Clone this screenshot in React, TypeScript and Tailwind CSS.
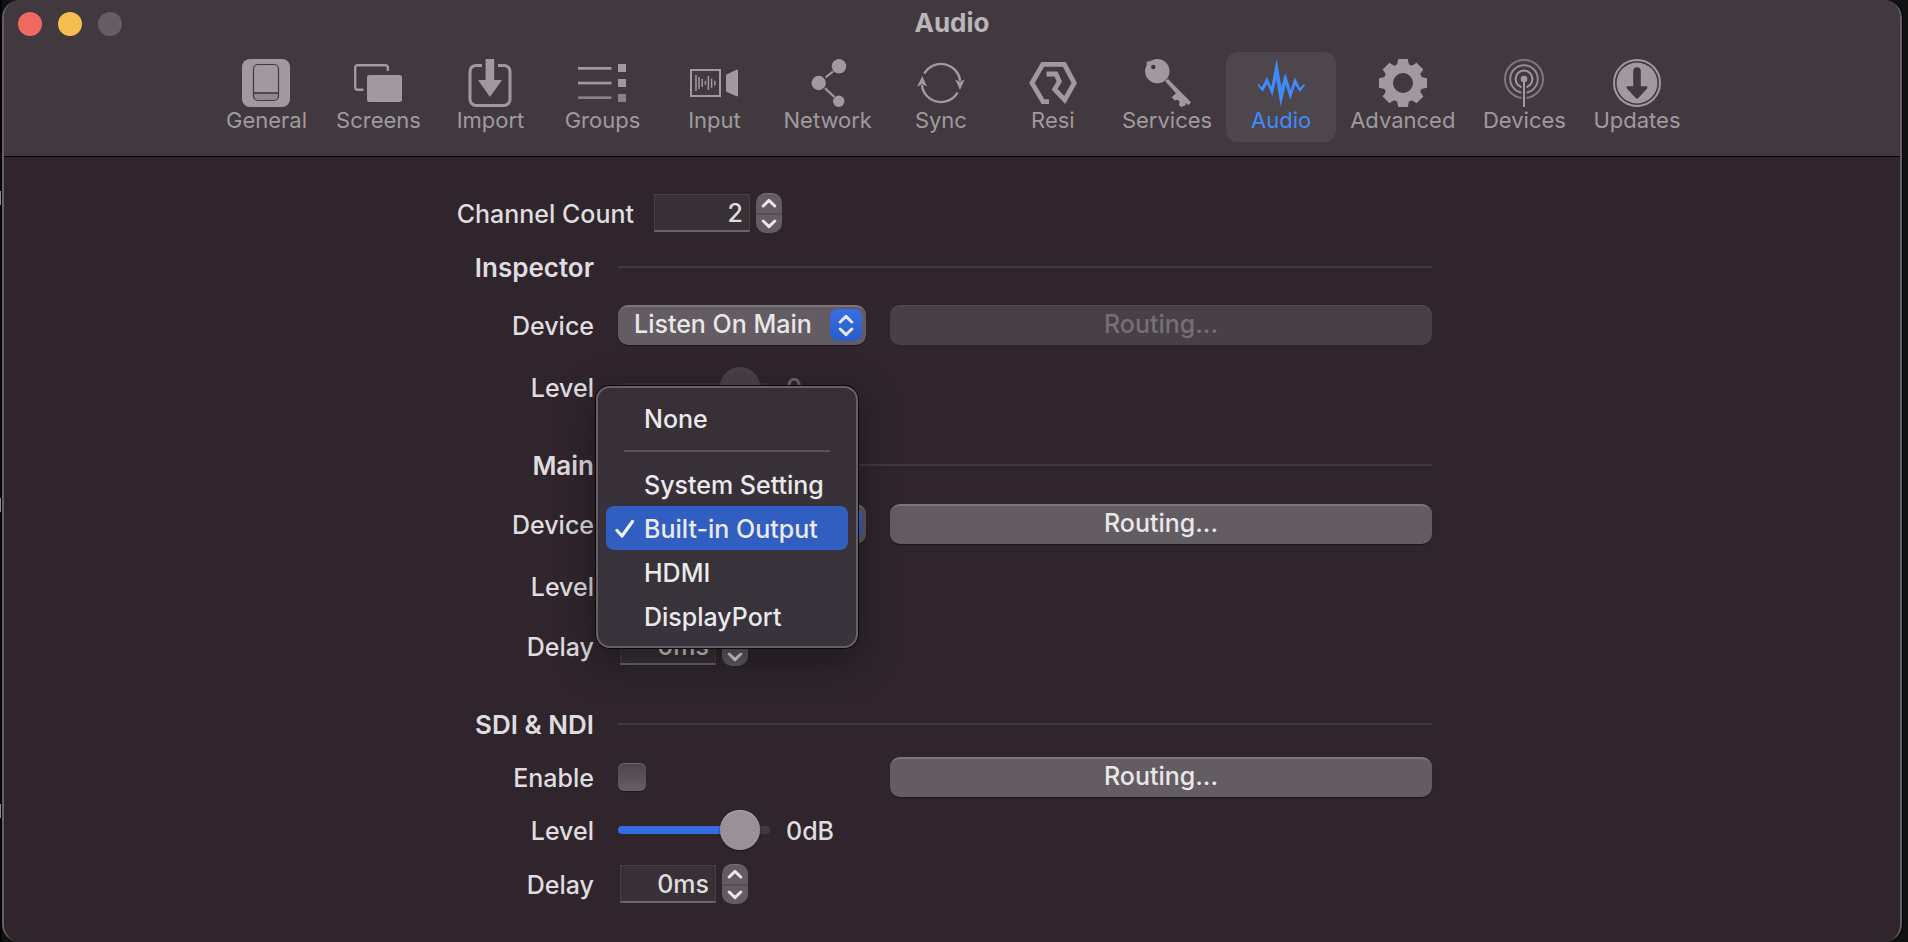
import { useId, useState } from "react";
import type { ReactNode } from "react";

const TOOLBAR_BG = "#41393f";

const icons: Record<string, ReactNode> = {
  General: (
    <>
      <rect width="48" height="48" rx="8" fill="currentColor" />
      <path d="M11.5 34H36.5V37a4.5 4.5 0 0 1-4.5 4.5H16a4.5 4.5 0 0 1-4.5-4.5Z" fill="#8f898e" />
      <rect x="11.5" y="5.5" width="25" height="36" rx="4.5" fill="none" stroke={TOOLBAR_BG} strokeWidth="1.2" />
      <path d="M11.5 34H36.5" stroke={TOOLBAR_BG} strokeWidth="1.6" />
    </>
  ),
  Screens: (
    <>
      <path d="M9.5 30.8H3.4A2.2 2.2 0 0 1 1.2 28.6V8.4A2.2 2.2 0 0 1 3.4 6.2H31.6A2.2 2.2 0 0 1 33.8 8.4V12" fill="none" stroke="currentColor" strokeWidth="2.4" />
      <rect x="13" y="16" width="35" height="27" rx="2.5" fill="currentColor" />
    </>
  ),
  Import: (
    <>
      <path d="M16 6.4H10A6 6 0 0 0 4 12.4V40.4A6 6 0 0 0 10 46.4H38A6 6 0 0 0 44 40.4V12.4A6 6 0 0 0 38 6.4H32" fill="none" stroke="currentColor" strokeWidth="3" />
      <path d="M19.6 0H28.2V21H36L24 38L12 21H19.6Z" fill="currentColor" />
    </>
  ),
  Groups: (
    <g fill="currentColor">
      <rect y="8" width="33.5" height="2.7" />
      <rect y="22.7" width="33.5" height="2.7" />
      <rect y="37.3" width="33.5" height="2.7" opacity="0.75" />
      <rect x="40" y="5" width="8" height="8" />
      <rect x="40" y="20" width="8" height="8" />
      <rect x="40" y="35" width="8" height="8" opacity="0.75" />
    </g>
  ),
  Input: (
    <>
      <rect x="1" y="11" width="29" height="26" fill="none" stroke="currentColor" strokeWidth="2" />
      <path d="M6 16V32M9 18V30M12.2 20V28M15.4 21.7V25.7M18.4 17V31M21.6 19.7V28.7M24.8 21.7V26.5" stroke="currentColor" strokeWidth="1.5" />
      <path d="M36 16.3L37 15.2L46.5 10.8H48V37.3H46.5L37 33L36 32Z" fill="currentColor" />
    </>
  ),
  Network: (
    <>
      <path d="M21.5 18.5L29 12.5M21 29.3L30.5 38" stroke="currentColor" strokeWidth="2.2" />
      <circle cx="35" cy="7.3" r="7.2" fill="currentColor" />
      <circle cx="14.7" cy="24" r="7.2" fill="currentColor" />
      <circle cx="34.7" cy="42.2" r="5.7" fill="currentColor" />
    </>
  ),
  Sync: (
    <>
      <path d="M7.3 14.7A19.2 19.2 0 0 1 43.1 22M40.6 33.5A19.2 19.2 0 0 1 4.9 26" fill="none" stroke="currentColor" strokeWidth="2.4" />
      <path d="M5.3 17L10 27.6L5 25L0 28Z M43 31L47.7 20.2L43 23L38.2 20.4Z" fill="currentColor" />
    </>
  ),
  Resi: (
    <path d="M20 42.6H14L3 24L13.7 5.4H35.3L45.3 24L35.7 41L25.7 30.4L30.3 22.4L27 15H17.5" fill="none" stroke="currentColor" strokeWidth="4.8" />
  ),
  Services: (
    <>
      <path d="M22 22L25 20L48 43.3L45.3 46.3L42.3 43.8L42.8 46.2L38 48L35.8 45.6L36.8 42.8L34.4 40.8L31.8 41.4L28.6 38.3L33 34.2Z" fill="currentColor" />
      <path d="M3.5 6L4 2.2L8 2.4Z" fill="currentColor" />
      <circle cx="14.3" cy="12.2" r="12.2" fill="currentColor" />
      <circle cx="10.3" cy="8" r="2.3" fill={TOOLBAR_BG} />
    </>
  ),
  Audio: (
    <path
      d="M0.3 26L1.3 24.7L4.7 28.3L10 18L14.3 27.7L19.7 0L24.3 27.7L28.3 14L33.7 31L37.7 18.3L43 29L47 25L48 26.3L43 33L38.3 26L33.3 40.7L28.7 26L23.7 47.7L19.3 20.3L15.3 37.3L10.3 25L5.7 32.7Z"
      fill="currentColor"
    />
  ),
  Advanced: (
    <g transform="translate(24 24)">
      <circle r="14.7" fill="none" stroke="currentColor" strokeWidth="9.4" />
      {[0, 45, 90, 135, 180, 225, 270, 315].map((a) => (
        <path key={a} d="M-4.8 -24H4.8L6.2 -17H-6.2Z" fill="currentColor" transform={`rotate(${a})`} />
      ))}
    </g>
  ),
  Devices: (
    <>
      <g fill="none" stroke="currentColor" strokeWidth="2">
        <circle cx="24" cy="20" r="19" opacity="0.65" />
        <circle cx="24" cy="20" r="13.8" opacity="0.85" />
        <circle cx="24" cy="20" r="8.4" />
      </g>
      <path d="M24 22V48" stroke={TOOLBAR_BG} strokeWidth="5" />
      <path d="M24 20V48" stroke="currentColor" strokeWidth="2" />
      <circle cx="24" cy="20" r="3.3" fill="currentColor" />
    </>
  ),
  Updates: (
    <>
      <circle cx="24" cy="24" r="23" fill="none" stroke="currentColor" strokeWidth="2" />
      <circle cx="24" cy="24" r="20.4" fill="currentColor" />
      <path d="M20.2 12A3.8 3.8 0 0 1 27.8 12V27.3H33.5Q35.4 27.6 34.3 29.2L25.4 39Q24 40.6 22.6 39L13.7 29.2Q12.6 27.6 14.5 27.3H20.2Z" fill={TOOLBAR_BG} />
    </>
  ),
};

function Toolbar() {
  const [active, setActive] = useState("Audio");
  return (
    <nav className="flex justify-center gap-0.5">
      {Object.keys(icons).map((name) => (
        <button
          key={name}
          type="button"
          onClick={() => setActive(name)}
          className={
            name === active
              ? "flex h-[90px] min-w-[110px] flex-col items-center rounded-xl bg-[#4d464c] px-3 pt-[7px] text-[#3f8bfd]"
              : "flex h-[90px] min-w-[110px] flex-col items-center rounded-xl px-3 pt-[7px] text-[#a09a9f]"
          }
        >
          <svg viewBox="0 0 48 48" className="size-12" aria-hidden="true">
            {icons[name]}
          </svg>
          <span className="text-[22px] leading-[26px]">{name}</span>
        </button>
      ))}
    </nav>
  );
}

function Chevron({ up = false }: { up?: boolean }) {
  return (
    <svg viewBox="0 0 16 10" className="h-2.5 w-4" aria-hidden="true">
      <path d={up ? "M2.2 8L8 2.4L13.8 8" : "M2.2 2L8 7.6L13.8 2"} fill="none" stroke="#e9e6e8" strokeWidth="3" strokeLinecap="round" strokeLinejoin="round" />
    </svg>
  );
}

function NumberField({ id, value }: { id: string; value: string }) {
  return (
    <div className="flex items-center gap-1.5">
      <input
        id={id}
        defaultValue={value}
        className="h-[38px] w-24 border border-b-2 border-[#463f45] border-b-[#6b656a] bg-[#393137] px-1.5 text-right text-[25px] font-medium text-[#dfdddf] outline-none"
      />
      <div className="flex h-10 w-[26px] flex-col overflow-hidden rounded-[10px] border-t border-[#777176] bg-[#635c62]">
        <button type="button" aria-label="Increase" className="flex flex-1 items-center justify-center border-b-2 border-[#564f55]">
          <Chevron up />
        </button>
        <button type="button" aria-label="Decrease" className="flex flex-1 items-center justify-center">
          <Chevron />
        </button>
      </div>
    </div>
  );
}

function Popup({ id, options, children }: { id: string; options: string[]; children?: ReactNode }) {
  return (
    <div className="relative w-[248px]">
      <select
        id={id}
        className="h-10 w-full appearance-none rounded-[10px] border-t-2 border-[#7c767b] bg-[#635c62] pr-9 pb-1 pl-4 text-[25px] font-medium text-[#e9e7e8] shadow-[0_1px_1px_#1d171c] outline-none"
      >
        {options.map((o) => (
          <option key={o}>{o}</option>
        ))}
      </select>
      <span className="pointer-events-none absolute top-1 right-1 flex size-8 flex-col items-center justify-center gap-[3px] rounded-lg bg-linear-to-b from-[#3570e4] to-[#2a5cc8]">
        <Chevron up />
        <Chevron />
      </span>
      {children}
    </div>
  );
}

function Level({ id, text, disabled = false }: { id: string; text: string; disabled?: boolean }) {
  return (
    <div className={disabled ? "flex items-center gap-4 opacity-35" : "flex items-center gap-4"}>
      <input
        id={id}
        type="range"
        defaultValue={91}
        disabled={disabled}
        className={
          disabled
            ? "h-10 w-[152px] appearance-none bg-transparent [&::-webkit-slider-runnable-track]:h-2 [&::-webkit-slider-runnable-track]:rounded-full [&::-webkit-slider-runnable-track]:bg-[#4a4248] [&::-webkit-slider-thumb]:-mt-4 [&::-webkit-slider-thumb]:size-10 [&::-webkit-slider-thumb]:appearance-none [&::-webkit-slider-thumb]:rounded-full [&::-webkit-slider-thumb]:bg-[#7c757b]"
            : "h-10 w-[152px] appearance-none bg-transparent [&::-webkit-slider-runnable-track]:h-2 [&::-webkit-slider-runnable-track]:rounded-full [&::-webkit-slider-runnable-track]:bg-[linear-gradient(to_right,#336be0_80%,#41393f_80%)] [&::-webkit-slider-thumb]:-mt-4 [&::-webkit-slider-thumb]:size-10 [&::-webkit-slider-thumb]:appearance-none [&::-webkit-slider-thumb]:rounded-full [&::-webkit-slider-thumb]:bg-[#989297] [&::-webkit-slider-thumb]:shadow-[0_1px_2px_#1d171c,inset_0_1px_0_#aea9ad]"
        }
      />
      <output htmlFor={id} className="pt-0.5">
        {text}
      </output>
    </div>
  );
}

function Routing({ disabled = false }: { disabled?: boolean }) {
  return (
    <button
      type="button"
      disabled={disabled}
      className={
        disabled
          ? "h-10 flex-1 rounded-[10px] border-t border-[#524b50] bg-[#484046] pb-1 text-[#766f74]"
          : "h-10 flex-1 rounded-[10px] border-t-2 border-[#7c767b] bg-[#635c62] pb-1 text-[#e9e7e8] shadow-[0_1px_1px_#1d171c]"
      }
    >
      Routing...
    </button>
  );
}

function Row({ id, label, className, children }: { id: string; label: string; className: string; children: ReactNode }) {
  return (
    <div className={`flex h-10 items-center gap-6 ${className}`}>
      <label htmlFor={id} className="w-40 shrink-0 pt-0.5 text-right">
        {label}
      </label>
      <div className="flex flex-1 items-center gap-6">{children}</div>
    </div>
  );
}

function Heading({ children, className }: { children: ReactNode; className: string }) {
  return (
    <div className={`flex h-10 items-center gap-6 ${className}`}>
      <h2 className="w-40 shrink-0 pt-0.5 text-right text-[26px] font-semibold">{children}</h2>
      <div className="h-0.5 flex-1 bg-[#413940]" />
    </div>
  );
}

const menuItem = "flex h-11 w-full items-center rounded-lg text-left text-[#ebe9ea]";

function DeviceMenu() {
  const [selected, setSelected] = useState("Built-in Output");
  const item = (name: string) => (
    <button
      key={name}
      type="button"
      role="menuitemradio"
      aria-checked={name === selected}
      onClick={() => setSelected(name)}
      className={name === selected ? `${menuItem} bg-[#305fc1]` : menuItem}
    >
      <span className="flex w-[38px] justify-center pt-0.5">
        {name === selected && (
          <svg viewBox="0 0 20 20" className="size-5" aria-hidden="true">
            <path d="M2 11.5L7 17L17.5 2.5" fill="none" stroke="#f3f3f6" strokeWidth="3.2" strokeLinecap="round" strokeLinejoin="round" />
          </svg>
        )}
      </span>
      <span className="pt-0.5 whitespace-nowrap">{name}</span>
    </button>
  );
  return (
    <div
      role="menu"
      className="absolute -top-[118px] -left-[22px] z-10 w-[262px] rounded-[14px] border-2 border-[#666066] bg-linear-to-b from-[#382f36] to-[#38333c] px-2 py-2 shadow-[0_0_0_1px_#0c090b,0_12px_36px_rgba(10,12,14,0.5)]"
    >
      {item("None")}
      <hr className="mx-[18px] my-2.5 border-t-2 border-[#5a5158]" />
      {["System Setting", "Built-in Output", "HDMI", "DisplayPort"].map(item)}
    </div>
  );
}

export default function App() {
  const id = useId();
  return (
    <div className="flex min-h-screen bg-[#111111] font-['Inter',sans-serif]">
      <div className="flex w-0.5 flex-col justify-between bg-[#030303] pt-[191px] pb-[124px]">
        <i className="h-3.5 w-px bg-[#8a8a8a]" />
        <i className="h-3.5 w-px bg-[#8a8a8a]" />
        <i className="h-3.5 w-px bg-[#8a8a8a]" />
      </div>
      <div className="mr-1.5 flex-1 overflow-hidden rounded-[18px] border-x-2 border-[#655f64] bg-[#30252d] shadow-[1px_0_0_#000]">
        <header className="border-b border-black bg-[#41393f] pb-3.5">
          <div className="grid h-[52px] grid-cols-[1fr_auto_1fr] items-start">
            <div className="flex gap-4 pt-3 pl-3.5">
              <button type="button" aria-label="Close" className="size-6 rounded-full bg-[#ee6a5f]" />
              <button type="button" aria-label="Minimize" className="size-6 rounded-full bg-[#f5bf4f]" />
              <button type="button" aria-label="Zoom" disabled className="size-6 rounded-full bg-[#655e64]" />
            </div>
            <h1 className="pt-1.5 text-[26px] leading-[34px] font-bold text-[#bab5b9]">Audio</h1>
          </div>
          <Toolbar />
        </header>
        <main className="mx-auto max-w-[1036px] pt-9 pr-[38px] pb-9 text-[25px] leading-8 font-medium text-[#dfdddf]">
          <div className="flex h-10 items-center gap-5">
            <label htmlFor={`${id}-channels`} className="w-[200px] pt-0.5 text-right">
              Channel Count
            </label>
            <NumberField id={`${id}-channels`} value="2" />
          </div>

          <Heading className="mt-[14px]">Inspector</Heading>
          <Row id={`${id}-in-device`} label="Device" className="mt-[18px]">
            <Popup id={`${id}-in-device`} options={["Listen On Main"]} />
            <Routing disabled />
          </Row>
          <Row id={`${id}-in-level`} label="Level" className="mt-[22px]">
            <Level id={`${id}-in-level`} text="0" disabled />
          </Row>

          <Heading className="mt-[38px]">Main</Heading>
          <Row id={`${id}-main-device`} label="Device" className="mt-[19px]">
            <Popup id={`${id}-main-device`} options={["Built-in Output"]}>
              <DeviceMenu />
            </Popup>
            <Routing />
          </Row>
          <Row id={`${id}-main-level`} label="Level" className="mt-[22px]">
            <Level id={`${id}-main-level`} text="0dB" />
          </Row>
          <Row id={`${id}-main-delay`} label="Delay" className="mt-[20px]">
            <div className="pl-0.5">
              <NumberField id={`${id}-main-delay`} value="0ms" />
            </div>
          </Row>

          <Heading className="mt-[38px]">SDI &amp; NDI</Heading>
          <Row id={`${id}-sdi-enable`} label="Enable" className="mt-[13px]">
            <div className="flex w-[248px]">
              <input
                id={`${id}-sdi-enable`}
                type="checkbox"
                className="size-7 appearance-none rounded-md bg-linear-to-b from-[#4c454b] to-[#675f66] shadow-[0_1px_1px_#1d171c,inset_0_1px_0_#6a6369]"
              />
            </div>
            <Routing />
          </Row>
          <Row id={`${id}-sdi-level`} label="Level" className="mt-[13px]">
            <Level id={`${id}-sdi-level`} text="0dB" />
          </Row>
          <Row id={`${id}-sdi-delay`} label="Delay" className="mt-[14px]">
            <div className="pl-0.5">
              <NumberField id={`${id}-sdi-delay`} value="0ms" />
            </div>
          </Row>
        </main>
      </div>
    </div>
  );
}
